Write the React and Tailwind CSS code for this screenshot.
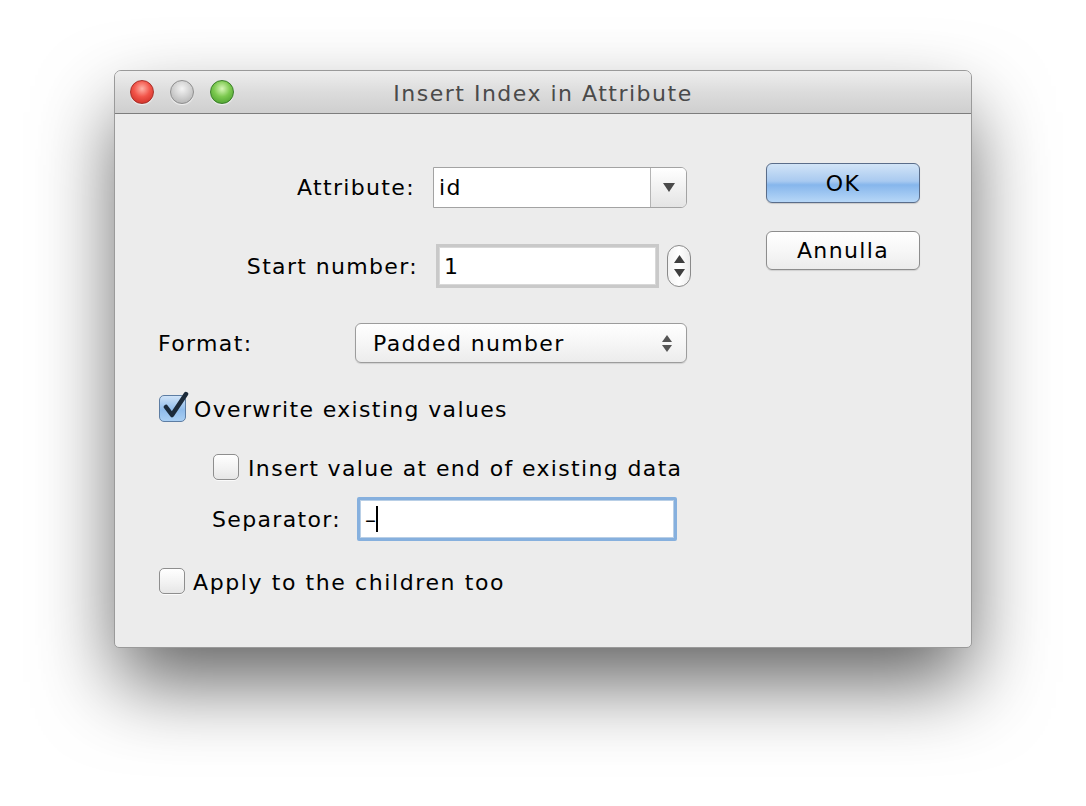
import React from 'react';

const font = { fontFamily: '"DejaVu Sans", "Liberation Sans", sans-serif' };

function TrafficLight({ tone }) {
  const fills = {
    red: 'bg-[radial-gradient(circle_at_50%_35%,#ffb3a8_0%,#f2554a_45%,#c4241b_100%)] border-[#a8302a]',
    gray: 'bg-[radial-gradient(circle_at_50%_35%,#f4f4f4_0%,#cfcfcf_50%,#a9a9a9_100%)] border-[#8f8f8f]',
    green: 'bg-[radial-gradient(circle_at_50%_35%,#d8f7b8_0%,#7cc94f_45%,#3f9526_100%)] border-[#3a7f2a]',
  };
  return <span className={`h-6 w-6 rounded-full border ${fills[tone]} shadow-[0_1px_1px_rgba(255,255,255,0.7)]`} />;
}

function Checkbox({ checked }) {
  if (checked) {
    return (
      <span className="relative h-[27px] w-[27px] shrink-0 rounded-[5px] border border-[#5d7da3] bg-[linear-gradient(#cfe3f8,#8fbbea_55%,#a9cff4)]">
        <svg className="absolute -top-[5px] left-[1px]" width="30" height="30" viewBox="0 0 30 30">
          <path d="M5 16 L11 24 L25 3" fill="none" stroke="#1b2a3a" strokeWidth="4.5" strokeLinecap="round" strokeLinejoin="round" />
        </svg>
      </span>
    );
  }
  return (
    <span className="h-[26px] w-[26px] shrink-0 rounded-[5px] border border-[#8e8e8e] bg-[linear-gradient(#ffffff,#f1f1f1_60%,#e6e6e6)] shadow-[0_1px_0_rgba(255,255,255,0.8)]" />
  );
}

export default function App() {
  return (
    <div className="min-h-[806px] w-[1086px] bg-white pl-[114px] pt-[70px] text-black" style={font}>
      <div className="flex h-[578px] w-[858px] flex-col overflow-hidden rounded-t-[7px] rounded-b-[5px] border border-[#9a9a9a] bg-[#ececec] shadow-[0_38px_80px_-4px_rgba(0,0,0,0.62)]">
        {/* title bar */}
        <div className="relative flex h-[43px] shrink-0 items-center border-b border-[#7d7d7d] bg-[linear-gradient(#eeeeee,#dcdcdc_50%,#cfcfcf)] pl-[15px]">
          <div className="flex gap-4">
            <TrafficLight tone="red" />
            <TrafficLight tone="gray" />
            <TrafficLight tone="green" />
          </div>
          <div className="absolute inset-x-0 top-0 flex h-full items-center justify-center pt-[3px] text-[22px] tracking-[1.5px] text-[#4a4a4a]">
            Insert Index in Attribute
          </div>
        </div>

        {/* body */}
        <div className="flex flex-1 pl-[43px]">
          <div className="flex w-[534px] flex-col pt-[53px] text-[22px] tracking-[1.35px]">
            {/* Attribute */}
            <div className="flex h-[41px] items-center">
              <span className="mr-[-1px] w-[257px] text-right">Attribute:</span>
              <div className="ml-[19px] flex h-[41px] w-[254px] overflow-hidden rounded-r-[6px] border border-[#a3a3a3] bg-white">
                <span className="flex flex-1 items-center pl-[5px]">id</span>
                <span className="flex w-[36px] items-center justify-center border-l border-[#b4b4b4] bg-[linear-gradient(#ffffff,#f0f0f0_55%,#e4e4e4)]">
                  <svg width="12" height="9" viewBox="0 0 12 9"><path d="M0 0 H12 L6 9 Z" fill="#4a4a4a" /></svg>
                </span>
              </div>
            </div>

            {/* Start number */}
            <div className="mt-[36px] flex h-[44px] items-center">
              <span className="mr-[-1px] w-[260px] text-right">Start number:</span>
              <div className="ml-[19px] flex h-[44px] w-[223px] items-center border-[3px] border-[#c9c9c9] bg-white pl-[5px] shadow-[inset_0_0_0_1px_#d8d8d8]">
                1
              </div>
              <div className="ml-[8px] flex h-[42px] w-[24px] flex-col items-center justify-center gap-[6px] rounded-[12px] border border-[#8a8a8a] bg-[linear-gradient(90deg,#f2f2f2,#ffffff_50%,#ececec)]">
                <svg width="11" height="8" viewBox="0 0 11 8"><path d="M0 8 H11 L5.5 0 Z" fill="#3e3e3e" /></svg>
                <svg width="11" height="8" viewBox="0 0 11 8"><path d="M0 0 H11 L5.5 8 Z" fill="#3e3e3e" /></svg>
              </div>
            </div>

            {/* Format */}
            <div className="mt-[35px] flex h-[40px] items-center">
              <span className="w-[197px]">Format:</span>
              <div className="flex h-[40px] w-[332px] items-center justify-between rounded-[6px] border border-[#9c9c9c] bg-[linear-gradient(#ffffff,#f6f6f6_50%,#ececec)] pl-[17px] pr-[14px] shadow-[0_1px_1px_rgba(0,0,0,0.12)]">
                <span>Padded number</span>
                <span className="flex flex-col gap-[3px]">
                  <svg width="10" height="7" viewBox="0 0 10 7"><path d="M0 7 H10 L5 0 Z" fill="#555" /></svg>
                  <svg width="10" height="7" viewBox="0 0 10 7"><path d="M0 0 H10 L5 7 Z" fill="#555" /></svg>
                </span>
              </div>
            </div>

            {/* Overwrite */}
            <div className="mt-[32px] flex h-[27px] items-center">
              <span className="ml-[1px] flex"><Checkbox checked /></span>
              <span className="ml-[8px] pt-[2px]">Overwrite existing values</span>
            </div>

            {/* Insert at end */}
            <div className="mt-[32px] flex h-[26px] items-center pl-[55px]">
              <Checkbox />
              <span className="ml-[9px] pt-[2px]">Insert value at end of existing data</span>
            </div>

            {/* Separator */}
            <div className="mt-[17px] flex h-[44px] items-center pl-[54px]">
              <span className="w-[145px]">Separator:</span>
              <div className="flex h-[44px] w-[320px] items-center rounded-[2px] border-[3px] border-[#86b0de] bg-white pl-[5px] shadow-[inset_0_0_0_1px_#b9cfe6]">
                <span>–</span>
                <span className="ml-[-1px] h-[26px] w-[2px] bg-black" />
              </div>
            </div>

            {/* Apply to children */}
            <div className="mt-[27px] flex h-[26px] items-center">
              <span className="ml-[1px] flex"><Checkbox /></span>
              <span className="ml-[8px] pt-[2px] tracking-[1.6px]">Apply to the children too</span>
            </div>
          </div>

          {/* buttons */}
          <div className="ml-[74px] flex flex-col pt-[49px] text-[22px] tracking-[1.35px]">
            <button className="flex h-[40px] w-[154px] items-center justify-center rounded-[6px] border border-[#5a6d8a] bg-[linear-gradient(#d2e4f7,#a9caf0_45%,#86b6ec_55%,#b7d7f7)] shadow-[0_1px_1px_rgba(0,0,0,0.15)]">
              OK
            </button>
            <button className="mt-[28px] flex h-[39px] w-[154px] items-center justify-center rounded-[6px] border border-[#8d8d8d] bg-[linear-gradient(#ffffff,#f7f7f7_50%,#ececec)] shadow-[0_1px_1px_rgba(0,0,0,0.12)]">
              Annulla
            </button>
          </div>
        </div>
      </div>
    </div>
  );
}
